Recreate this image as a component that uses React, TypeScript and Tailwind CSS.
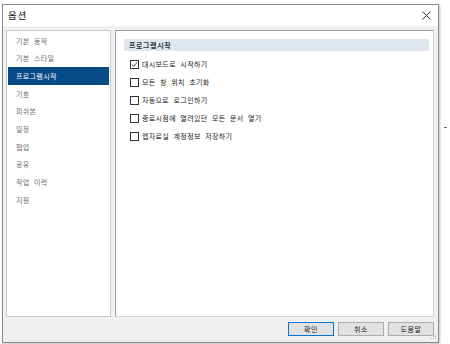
import React from 'react';

const categories = ['기본 동작', '기본 스타일', '프로그램시작', '기호', '피쉬본', '일정', '협업', '공유', '작업 이력', '지원'];

const options = [
  { label: '대시보드로 시작하기', checked: true },
  { label: '모든 창 위치 초기화', checked: false },
  { label: '자동으로 로그인하기', checked: false },
  { label: '종료시점에 열려있던 모든 문서 열기', checked: false },
  { label: '엡자료실 계정정보 저장하기', checked: false },
];

function CheckBox({ checked }: { checked: boolean }) {
  return (
    <span className="flex h-[9px] w-[9px] shrink-0 items-center justify-center border border-[#333] bg-white">
      {checked && (
        <svg width="7" height="7" viewBox="0 0 7 7" fill="none">
          <path d="M0.8 3.6 L2.7 5.4 L6.3 1.2" stroke="#333" strokeWidth="0.9" />
        </svg>
      )}
    </span>
  );
}

function DialogButton({ label, primary }: { label: string; primary?: boolean }) {
  return (
    <button
      className={`flex h-[14px] w-[46px] items-center justify-center bg-[#e1e1e1] text-[7px] tracking-[0.6px] text-[#222] ${
        primary ? 'border border-[#0078d7]' : 'border border-[#adadad]'
      }`}
    >
      {label}
    </button>
  );
}

export default function App() {
  return (
    <div
      className="relative h-[344px] w-[450px] bg-white pl-[2px] pt-[4px]"
      style={{ fontFamily: '"Noto Sans CJK KR", "Noto Sans", sans-serif' }}
    >
      <div className="flex h-[339px] w-[437px] flex-col border border-[#8a8a8a] bg-[#f0f0f0] shadow-[1px_1px_2px_rgba(0,0,0,0.25)]">
        {/* title bar */}
        <div className="flex h-[21px] shrink-0 items-center justify-between bg-white pl-[5px] pr-[7px]">
          <span className="text-[9.5px] tracking-[0.8px] text-[#111]">옵션</span>
          <svg width="9" height="9" viewBox="0 0 9 9">
            <path d="M0.5 0.5 L8.5 8.5 M8.5 0.5 L0.5 8.5" stroke="#222" strokeWidth="0.9" />
          </svg>
        </div>

        <div className="flex h-[291px] shrink-0 gap-[4px] pl-[3px] pr-[4px] pt-[4px]">
          {/* category list */}
          <div className="flex h-[287px] w-[105px] flex-col border border-[#c9c9c9] bg-white p-[1px]">
            {categories.map((c) => {
              const sel = c === '프로그램시작';
              return (
                <div
                  key={c}
                  className={`flex h-[17.7px] shrink-0 items-center pl-[8px] text-[7px] tracking-[0.35px] [word-spacing:2.5px] ${
                    sel ? 'bg-[#064b88] text-white' : 'text-[#6d6d6d]'
                  }`}
                >
                  {c}
                </div>
              );
            })}
          </div>

          {/* settings panel */}
          <div className="flex h-[287px] flex-1 flex-col border border-[#a0a0a8] border-b-[#d5d5d5] border-r-[#d5d5d5] bg-white pl-[8px] pr-[4px] pt-[8px]">
            <div className="flex h-[12px] shrink-0 items-center bg-[#dfe6ee] pl-[5px] text-[7px] font-bold tracking-[0.6px] text-[#333]">
              프로그램시작
            </div>
            <div className="flex flex-col pl-[6px] pt-[4px]">
              {options.map((o) => (
                <div key={o.label} className="flex h-[18px] items-center gap-[3px]">
                  <CheckBox checked={o.checked} />
                  <span className="text-[7px] tracking-[0.35px] text-[#222] [word-spacing:2.5px]">{o.label}</span>
                </div>
              ))}
            </div>
          </div>
        </div>

        {/* footer buttons */}
        <div className="relative flex flex-1 justify-end gap-[4px] pr-[4px] pt-[5px]">
          <DialogButton label="확인" primary />
          <DialogButton label="취소" />
          <DialogButton label="도움말" />
          <svg className="absolute bottom-[2px] right-[1px]" width="6" height="6" viewBox="0 0 6 6">
            <rect x="4" y="0" width="1" height="1" fill="#b0b0b0" />
            <rect x="2" y="2" width="1" height="1" fill="#b0b0b0" />
            <rect x="4" y="2" width="1" height="1" fill="#b0b0b0" />
            <rect x="0" y="4" width="1" height="1" fill="#b0b0b0" />
            <rect x="2" y="4" width="1" height="1" fill="#b0b0b0" />
            <rect x="4" y="4" width="1" height="1" fill="#b0b0b0" />
          </svg>
        </div>
      </div>
      <span className="absolute left-[444px] top-[127px] h-[1px] w-[3px] bg-[#666]" />
    </div>
  );
}
